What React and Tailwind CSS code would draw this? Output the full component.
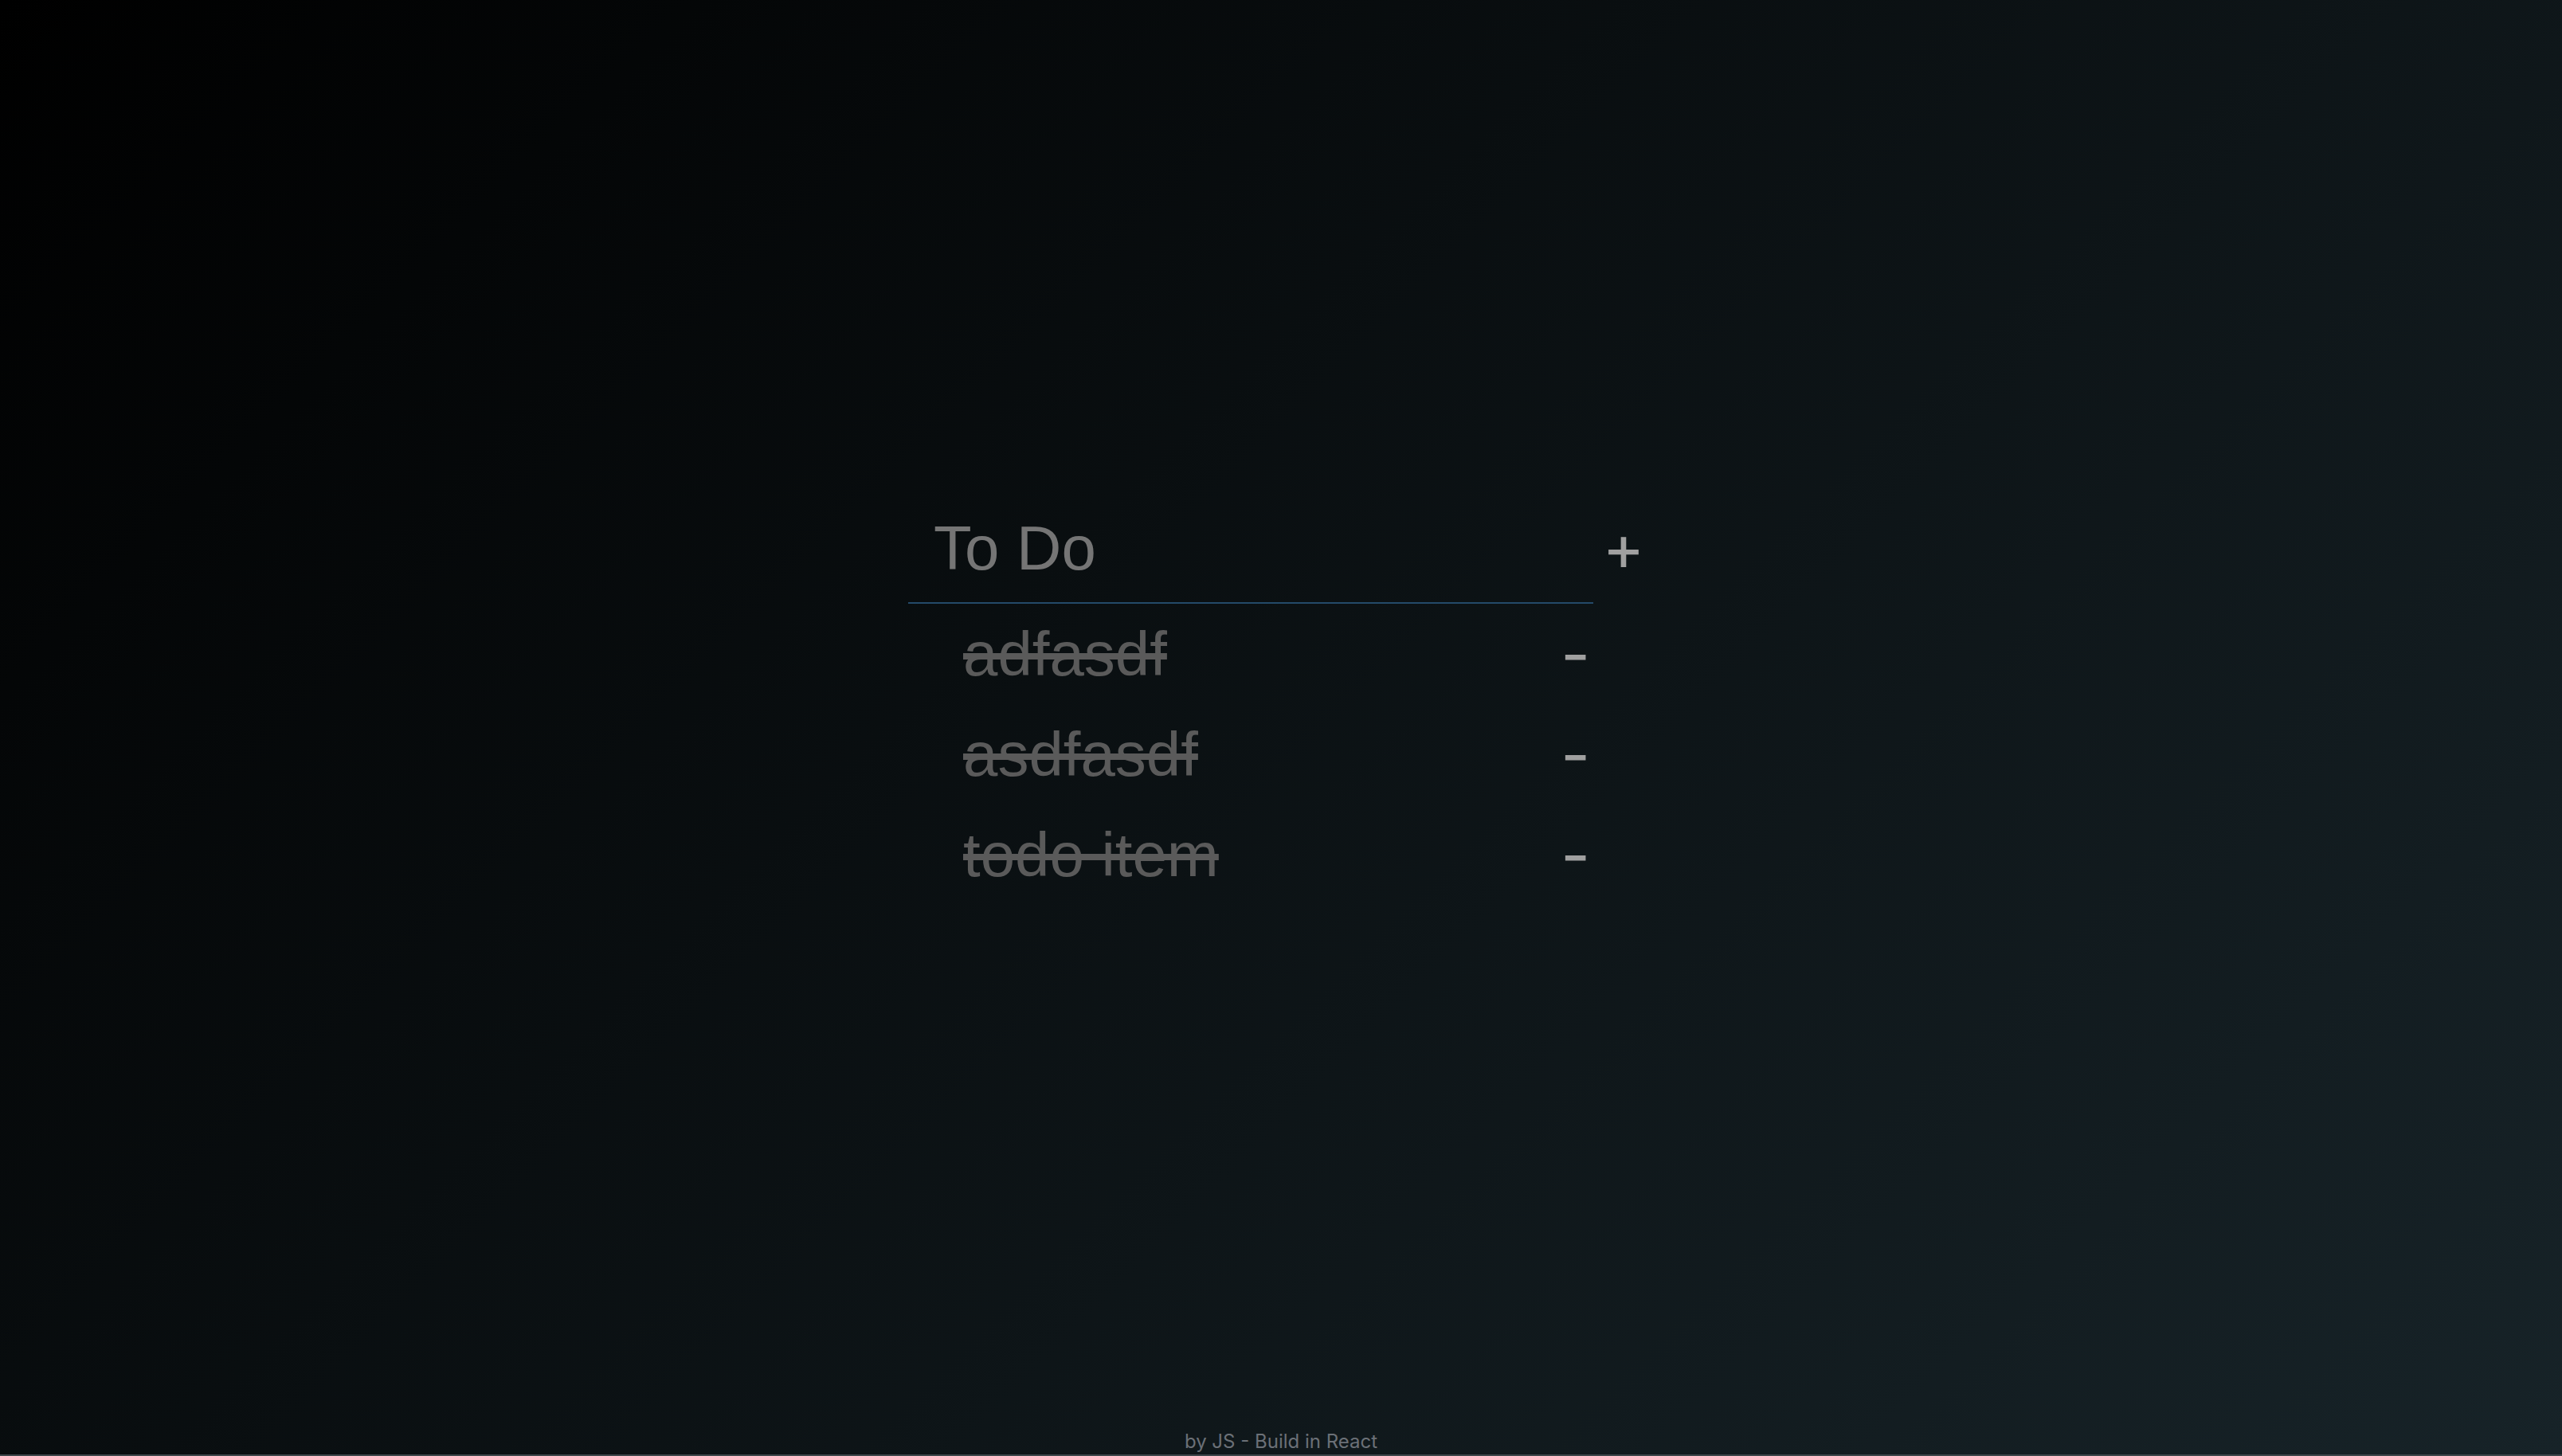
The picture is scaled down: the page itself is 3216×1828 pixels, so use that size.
const items = ['adfasdf', 'asdfasdf', 'todo item'];

export default function App() {
  return (
    <div className="flex min-h-screen flex-col items-center border-b-2 border-[#3d464a] bg-[linear-gradient(135deg,#000000,#172328)] font-['Inter',sans-serif]">
      <main className="mt-[620px] w-full max-w-[936px]">
        <form className="flex items-center" onSubmit={(e) => e.preventDefault()}>
          <input
            aria-label="To Do"
            placeholder="To Do"
            className="h-[138px] min-w-0 flex-1 border-b-2 border-[#244a69] bg-transparent px-8 font-['Liberation_Sans',sans-serif] text-[78px] text-[#a0a0a0] outline-none placeholder:text-[#757575] placeholder:opacity-100"
          />
          <button type="submit" aria-label="Add" className="w-[76px] shrink-0 pb-1 text-center text-[80px] leading-[96px] text-[#a0a0a0]">+</button>
        </form>
        <ul className="mr-[76px]">
          {items.map((item) => (
            <li key={item} className="flex h-[126px] items-center justify-between pr-1 pl-[69px]">
              <span className="font-['Liberation_Sans',sans-serif] text-[78px] text-[#5a5a5a] line-through decoration-[8px]">{item}</span>
              <button type="button" aria-label={`Remove ${item}`} className="text-[80px] leading-[96px] text-[#a0a0a0]">-</button>
            </li>
          ))}
        </ul>
      </main>
      <footer className="mt-auto text-[24px] leading-[32px] text-[#6b7077]">by JS - Build in React</footer>
    </div>
  );
}
